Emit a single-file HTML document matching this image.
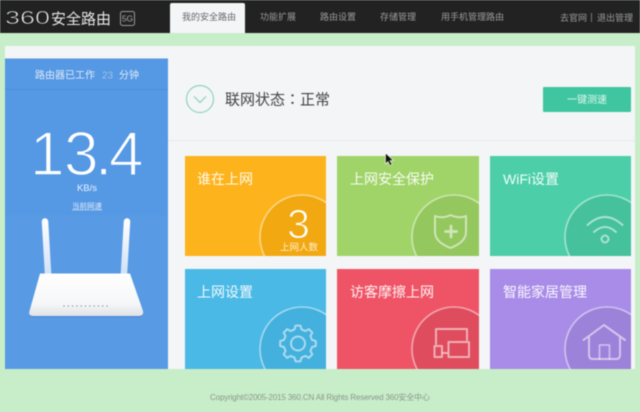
<!DOCTYPE html>
<html lang="zh">
<head>
<meta charset="utf-8">
<title>360安全路由</title>
<style>
html,body{margin:0;padding:0;width:640px;height:412px;overflow:hidden;background:#c8edc9}
svg{display:block;filter:blur(.4px)}
text{font-family:"Liberation Sans","Noto Sans CJK SC",sans-serif}
.nav{font-size:9px;fill:#9c9c9c}
.title{font-size:14px;fill:#fff;fill-opacity:.93}
.ring{stroke-width:1.6;stroke:#fff;stroke-opacity:.5}
.ic{fill:none;stroke:#fff;stroke-opacity:.55;stroke-width:2;stroke-linejoin:round;stroke-linecap:round}
</style>
</head>
<body>
<svg width="640" height="412" viewBox="0 0 640 412" xmlns="http://www.w3.org/2000/svg">
<defs>
<clipPath id="c1"><rect x="185" y="156" width="141" height="100"/></clipPath>
<clipPath id="c2"><rect x="337" y="156" width="142" height="100"/></clipPath>
<clipPath id="c3"><rect x="490" y="156" width="141" height="100"/></clipPath>
<clipPath id="c4"><rect x="185" y="269" width="141" height="100"/></clipPath>
<clipPath id="c5"><rect x="337" y="269" width="142" height="100"/></clipPath>
<clipPath id="c6"><rect x="490" y="269" width="141" height="100"/></clipPath>
<pattern id="grid" width="2" height="2" patternUnits="userSpaceOnUse"><path d="M0 0H2M0 0V2" stroke="#7eb2ec" stroke-opacity=".28" stroke-width=".6" fill="none"/></pattern>
<linearGradient id="rb" x1="0" y1="0" x2="0" y2="1"><stop offset="0" stop-color="#ffffff"/><stop offset=".7" stop-color="#f6f7f8"/><stop offset="1" stop-color="#dfe3e7"/></linearGradient>
<linearGradient id="ant" gradientUnits="userSpaceOnUse" x1="0" y1="218" x2="0" y2="273"><stop offset="0" stop-color="#ffffff"/><stop offset="1" stop-color="#d2e2f6"/></linearGradient>
</defs>

<!-- page + header -->
<rect width="640" height="412" fill="#c8edc9"/>
<rect width="640" height="33" fill="#222222"/>
<text x="5" y="24" font-size="18" fill="#eeeeee" textLength="45" lengthAdjust="spacingAndGlyphs" stroke="#222222" stroke-width=".6">360</text>
<text x="51" y="24" font-size="15" fill="#e8e8e8">安全路由</text>
<rect x="120.500" y="11.500" width="14" height="14" rx="2" fill="none" stroke="#999" stroke-width="1"/>
<text x="127.500" y="21.500" font-size="8.500" fill="#aaa" text-anchor="middle">5G</text>

<path d="M170 33V5a2 2 0 0 1 2-2H243a2 2 0 0 1 2 2V33z" fill="#f3f5f7"/>
<text x="182" y="20" class="nav" style="fill:#666">我的安全路由</text>
<text x="260" y="20" class="nav">功能扩展</text>
<text x="320" y="20" class="nav">路由设置</text>
<text x="380" y="20" class="nav">存储管理</text>
<text x="441" y="20" class="nav">用手机管理路由</text>
<text x="560" y="21" class="nav">去官网</text>
<rect x="591" y="13" width="1" height="9" fill="#777"/>
<text x="597" y="21" class="nav">退出管理</text>

<!-- main panel -->
<rect x="5" y="46" width="630" height="324" fill="#f3f5f7"/>
<rect x="168" y="140" width="467" height="1" fill="#e8eaec"/>

<!-- left blue panel -->
<rect x="5" y="58.500" width="163" height="312" fill="#5598e4"/>
<rect x="5" y="215" width="163" height="155" fill="url(#grid)"/>
<rect x="5" y="89" width="163" height="1" fill="#4c8cd6"/>
<text x="35" y="78.500" font-size="10" fill="#dfeaf8">路由器已工作</text>
<text x="102" y="78.500" font-size="10" fill="#9fc0e8">23</text>
<text x="119" y="78.500" font-size="10" fill="#dfeaf8">分钟</text>
<text x="30 64 95 109" y="175" font-size="62" fill="#fff" stroke="#5598e4" stroke-width="1.400">13.4</text>
<text x="87" y="191" font-size="9.500" fill="#eef4fc" text-anchor="middle">KB/s</text>
<text x="87" y="208.500" font-size="7.500" fill="#e0ebf9" text-anchor="middle">当前网速</text>
<rect x="72" y="209.700" width="30" height=".6" fill="#cfe0f6"/>

<!-- router -->
<path d="M45 221.500L48 273" stroke="url(#ant)" stroke-width="6.500" stroke-linecap="round" fill="none"/>
<path d="M127 221.500L124 273" stroke="url(#ant)" stroke-width="6.500" stroke-linecap="round" fill="none"/>
<path d="M40 273.500H130L143 311Q144 316 139 316H33Q28 316 29.500 311z" fill="#3f78bd" fill-opacity=".45" transform="translate(0 1.200)"/>
<path d="M40 273.500H130L143 311Q144 316 139 316H33Q28 316 29.500 311z" fill="url(#rb)"/>
<path d="M63.500 306H110.500" stroke="#5a6d80" stroke-width="1" stroke-dasharray="1 3.300" fill="none"/>

<!-- status -->
<circle cx="200" cy="99" r="13.500" fill="none" stroke="#7fcdb5" stroke-width="1"/>
<path d="M194 96.500L200 102.500L206 96.500" fill="none" stroke="#7fcdb5" stroke-width="1"/>
<text x="225" y="104.500" font-size="15" fill="#444">联网状态</text>
<text x="285" y="104.500" font-size="15" fill="#444" style='font-family:"Noto Sans CJK TC",sans-serif'>：</text>
<text x="300" y="104.500" font-size="15" fill="#444">正常</text>
<rect x="543" y="87" width="88" height="25" rx="1" fill="#3fc6a1"/>
<text x="587" y="103" font-size="10" fill="#dff6ee" text-anchor="middle">一键测速</text>

<!-- card 1 -->
<rect x="185" y="156" width="141" height="100" fill="#fdb31b"/>
<g clip-path="url(#c1)"><circle cx="302" cy="237" r="42" fill="#f2a811" class="ring"/></g>
<text x="197" y="184" class="title">谁在上网</text>
<text x="298.500" y="238" font-size="41" fill="#fff" text-anchor="middle" stroke="#f2a811" stroke-width="1">3</text>
<text x="299" y="250.500" font-size="9.500" fill="#fdf0d0" text-anchor="middle">上网人数</text>

<!-- card 2 -->
<rect x="337" y="156" width="142" height="100" fill="#a0d468"/>
<g clip-path="url(#c2)"><circle cx="454" cy="237" r="42" fill="#95c75f" class="ring"/></g>
<text x="350" y="184" class="title">上网安全保护</text>
<path class="ic" d="M450.500 215Q459 219 466 216V232Q466 242 450.500 248Q435 242 435 232V216Q443 219 450.500 215z"/>
<path class="ic" stroke-width="3" style="stroke-width:2.800" d="M451 226V237M445.500 231.500H456.500"/>

<!-- card 3 -->
<rect x="490" y="156" width="141" height="100" fill="#4ccfa8"/>
<g clip-path="url(#c3)"><circle cx="607" cy="237" r="42" fill="#45c19c" class="ring"/></g>
<text x="503" y="184" class="title">WiFi设置</text>
<path class="ic" d="M587.500 225Q605 209 622.500 225M594 232Q605 222 616 232"/>
<circle cx="605" cy="239" r="3.500" class="ic"/>

<!-- card 4 -->
<rect x="185" y="269" width="141" height="100" fill="#4ab9e6"/>
<g clip-path="url(#c4)"><circle cx="302" cy="349" r="42" fill="#44b0dd" class="ring"/></g>
<text x="197" y="297" class="title">上网设置</text>
<circle cx="298" cy="343.500" r="7" class="ic"/>
<path class="ic" transform="translate(298 343.500)" d="M14.070 -3.510L17.820 -2.500 17.820 2.500 14.070 3.510 12.430 7.470 14.380 10.830 10.830 14.380 7.470 12.430 3.510 14.070 2.500 17.820 -2.500 17.820 -3.510 14.070 -7.470 12.430 -10.830 14.380 -14.380 10.830 -12.430 7.470 -14.070 3.510 -17.820 2.500 -17.820 -2.500 -14.070 -3.510 -12.430 -7.470 -14.380 -10.830 -10.830 -14.380 -7.470 -12.430 -3.510 -14.070 -2.500 -17.820 2.500 -17.820 3.510 -14.070 7.470 -12.430 10.830 -14.380 14.380 -10.830 12.430 -7.470Z"/>

<!-- card 5 -->
<rect x="337" y="269" width="142" height="100" fill="#ef5466"/>
<g clip-path="url(#c5)"><circle cx="454" cy="349" r="42" fill="#df4c5e" class="ring"/></g>
<text x="350" y="297" class="title">访客摩擦上网</text>
<path class="ic" d="M436 344V329H467V340"/>
<rect x="448.500" y="342" width="20.500" height="15" class="ic"/>
<rect x="434.500" y="346" width="7.500" height="11" class="ic"/>
<path class="ic" d="M443 353H447"/>

<!-- card 6 -->
<rect x="490" y="269" width="141" height="100" fill="#a98ce8"/>
<g clip-path="url(#c6)"><circle cx="607" cy="349" r="42" fill="#9d82da" class="ring"/></g>
<text x="503" y="297" class="title">智能家居管理</text>
<path class="ic" d="M583.500 340L604 325L625 340M589 337V355Q589 359 593 359H616Q620 359 620 355V337"/>
<path class="ic" style="stroke-width:1.500" d="M599.500 359V345H609.500V359"/>

<!-- footer -->
<rect x="0" y="369" width="640" height="43" fill="#c8edc9"/>
<text x="210" y="400" font-size="8" fill="#8a978b" textLength="220" lengthAdjust="spacing">Copyright©2005-2015 360.CN All Rights Reserved 360安全中心</text>

<!-- cursor -->
<path d="M385.500 153V164L388 161.500L390 165.500L392 164.500L390 160.500H393.500z" fill="#111" stroke="#fff" stroke-width=".6"/>
</svg>
</body>
</html>
